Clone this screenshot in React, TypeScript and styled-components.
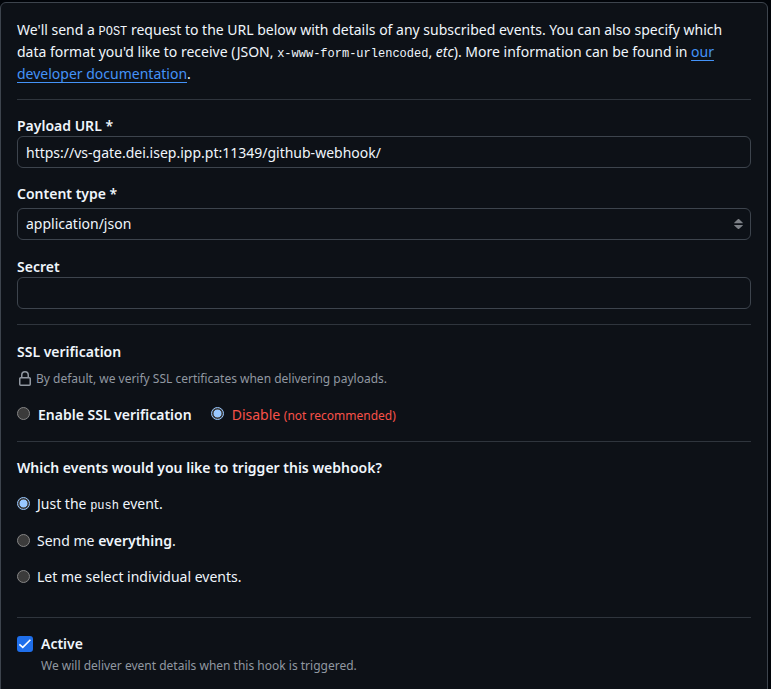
import React from "react";
import styled, { createGlobalStyle, css } from "styled-components";

const GlobalStyle = createGlobalStyle`
  *, *::before, *::after { box-sizing: border-box; }
  html, body { margin: 0; height: 100%; overflow: hidden; background: #010409; }
  body {
    color: #f0f6fc;
    font-family: "Noto Sans", sans-serif;
    font-size: 14px;
    line-height: 22px;
  }
`;

const Panel = styled.main`
  width: 768px;
  height: 700px;
  margin-top: 2px;
  padding: 16px;
  background: #0d1117;
  border: 1px solid #3d444d;
  border-radius: 6px;
`;

const Intro = styled.p`
  margin: 0 0 14px;
`;

const Code = styled.code`
  font-family: "Liberation Mono", monospace;
  font-size: 12px;
  line-height: 1;
`;

const DocLink = styled.a`
  color: #4493f8;
  text-decoration: underline;
  text-underline-offset: 3.2px;
  text-decoration-thickness: 1px;
  text-decoration-skip-ink: none;
`;

const Divider = styled.hr`
  height: 1px;
  margin: 0;
  border: 0;
  background: #2f353d;
`;

const Field = styled.div<{ $top: number; $gap?: number }>`
  display: flex;
  flex-direction: column;
  gap: ${(p) => p.$gap ?? 0}px;
  margin-top: ${(p) => p.$top}px;
`;

const Label = styled.label`
  height: 21px;
  line-height: 21px;
  font-weight: 600;
`;

const control = css`
  display: block;
  width: 100%;
  height: 32px;
  padding: 0 8px;
  color: #f0f6fc;
  background: #0d1117;
  border: 1px solid #3d444d;
  border-radius: 6px;
  font: inherit;
  line-height: 20px;
  outline: none;
`;

const TextInput = styled.input`
  ${control}
`;

const SelectBox = styled.button`
  ${control}
  display: flex;
  align-items: center;
  justify-content: space-between;
  padding-right: 7px;
  text-align: left;
`;

const SectionTitle = styled.h2<{ $top: number }>`
  margin: ${(p) => p.$top}px 0 0;
  font-size: 14px;
  font-weight: 600;
  line-height: 22px;
`;

const Note = styled.p`
  display: flex;
  align-items: center;
  height: 20px;
  margin: 6px 0 0;
  color: #9198a1;
  font-size: 12px;
  line-height: 20px;
`;

const LockIcon = styled.svg`
  width: 16px;
  height: 16px;
  margin-right: 3px;
  fill: #9198a1;
`;

const SslOptions = styled.div`
  display: flex;
  gap: 19px;
  height: 22px;
  margin: 15px 0 15px;
`;

const EventOptions = styled.div`
  display: grid;
  grid-template-rows: 37px 36px 22px;
  margin: 14px 0 29px;
`;

const Option = styled.label<{ $gap?: number; $bold?: boolean; $danger?: boolean }>`
  display: flex;
  align-items: flex-start;
  gap: ${(p) => p.$gap ?? 7}px;
  height: 22px;
  font-weight: ${(p) => (p.$bold ? 600 : 400)};
  color: ${(p) => (p.$danger ? "#f85149" : "inherit")};
`;

const Radio = styled.input.attrs({ type: "radio" })<{ $top?: number }>`
  appearance: none;
  flex: none;
  width: 13px;
  height: 13px;
  margin: ${(p) => p.$top ?? 4}px 0 0;
  border: 1px solid #858585;
  border-radius: 50%;
  background: #3b3b3b;

  &:checked {
    border-color: #99c8ff;
    background: radial-gradient(circle, #99c8ff 3.6px, #3b3b3b 4.3px);
  }
`;

const Small = styled.small`
  font-size: 12px;
`;

const Strong = styled.b`
  font-weight: 600;
`;

const ActiveRow = styled.label`
  display: flex;
  align-items: center;
  gap: 8px;
  height: 22px;
  margin-top: 15px;
  font-weight: 600;
`;

const CheckMark = styled.svg`
  width: 16px;
  height: 16px;
  border-radius: 3px;
  background: #1f6feb;
`;

const Help = styled.p`
  margin: 1px 0 0 24px;
  color: #9198a1;
  font-size: 12px;
  line-height: 20px;
`;

function SelectArrows() {
  return (
    <svg width="9" height="10" viewBox="0 0 9 10" fill="#7d8187">
      <path d="M3.8.3a1 1 0 0 1 1.4 0L8.8 3.7V4.3H.2V3.7ZM.2 6H8.8V6.5L5.2 9.8a1 1 0 0 1-1.4 0L.2 6.5Z" />
    </svg>
  );
}

export default function App() {
  return (
    <>
      <GlobalStyle />
      <Panel>
        <Intro>
          We'll send a <Code>POST</Code> request to the URL below with details of any subscribed
          events. You can also specify which data format you'd like to receive (JSON,{" "}
          <Code>x-www-form-urlencoded</Code>, <em>etc</em>). More information can be found in{" "}
          <DocLink href="#">our developer documentation</DocLink>.
        </Intro>
        <Divider />

        <Field $top={15}>
          <Label htmlFor="url">Payload URL *</Label>
          <TextInput id="url" defaultValue="https://vs-gate.dei.isep.ipp.pt:11349/github-webhook/" />
        </Field>
        <Field $top={15} $gap={4}>
          <Label>Content type *</Label>
          <SelectBox type="button">
            application/json
            <SelectArrows />
          </SelectBox>
        </Field>
        <Field $top={16}>
          <Label htmlFor="secret">Secret</Label>
          <TextInput id="secret" />
        </Field>

        <Field $top={15}>
          <Divider />
        </Field>
        <SectionTitle $top={16}>SSL verification</SectionTitle>
        <Note>
          <LockIcon viewBox="0 0 16 16">
            <path d="M4 4a4 4 0 0 1 8 0v2h.25c.966 0 1.75.784 1.75 1.75v5.5A1.75 1.75 0 0 1 12.25 15h-8.5A1.75 1.75 0 0 1 2 13.25v-5.5C2 6.784 2.784 6 3.75 6H4Zm8.25 3.5h-8.5a.25.25 0 0 0-.25.25v5.5c0 .138.112.25.25.25h8.5a.25.25 0 0 0 .25-.25v-5.5a.25.25 0 0 0-.25-.25ZM10.5 6V4a2.5 2.5 0 1 0-5 0v2Z" />
          </LockIcon>
          By default, we verify SSL certificates when delivering payloads.
        </Note>
        <SslOptions>
          <Option $bold $gap={8}>
            <Radio name="ssl" $top={3} />
            <span>Enable SSL verification</span>
          </Option>
          <Option $danger $gap={8}>
            <Radio name="ssl" $top={3} defaultChecked />
            <span>
              Disable <Small>(not recommended)</Small>
            </span>
          </Option>
        </SslOptions>
        <Divider />

        <SectionTitle $top={15}>Which events would you like to trigger this webhook?</SectionTitle>
        <EventOptions>
          <Option>
            <Radio name="events" defaultChecked />
            <span>
              Just the <Code>push</Code> event.
            </span>
          </Option>
          <Option>
            <Radio name="events" />
            <span>
              Send me <Strong>everything</Strong>.
            </span>
          </Option>
          <Option>
            <Radio name="events" />
            <span>Let me select individual events.</span>
          </Option>
        </EventOptions>
        <Divider />

        <ActiveRow>
          <CheckMark viewBox="0 0 16 16">
            <path d="M2.4 8.4 5.8 11.4 13.4 3.8" fill="none" stroke="#fff" strokeWidth="1.6" />
          </CheckMark>
          Active
        </ActiveRow>
        <Help>We will deliver event details when this hook is triggered.</Help>
      </Panel>
    </>
  );
}
